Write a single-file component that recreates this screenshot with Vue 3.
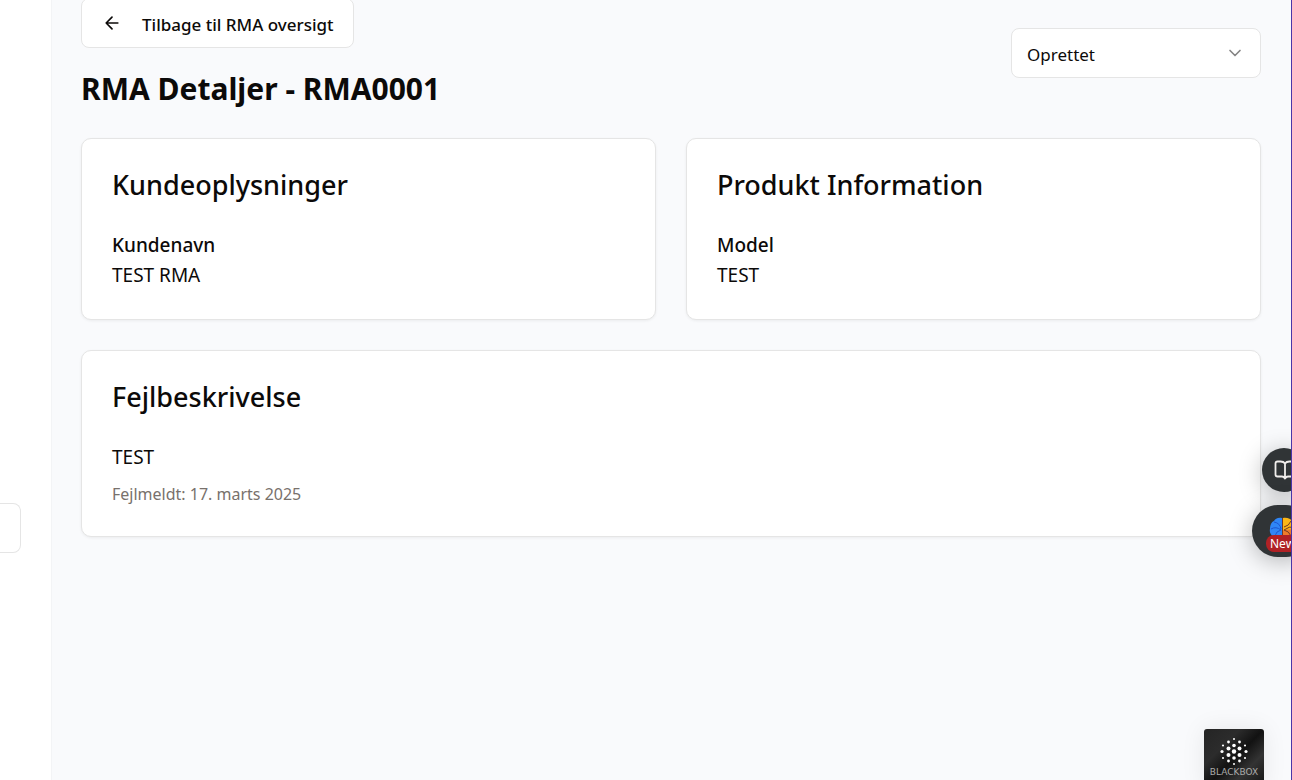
<script setup>
import { ref } from 'vue'

const status = ref('Oprettet')
const cards = [
  { title: 'Kundeoplysninger', label: 'Kundenavn', value: 'TEST RMA' },
  { title: 'Produkt Information', label: 'Model', value: 'TEST' }
]
const dots = [
  [30, 10, 1], [24.5, 13, 1.4], [35.5, 13, 1.4],
  [19, 16.5, 1.1], [30, 16.5, 1.8], [41, 16.5, 1.1],
  [24.5, 19.5, 2], [35.5, 19.5, 2],
  [18, 22.5, 1.6], [30, 22.5, 2.2], [42, 22.5, 1.6],
  [24.5, 26, 2], [35.5, 26, 2],
  [19, 29, 1.1], [30, 29, 1.8], [41, 29, 1.1],
  [24.5, 32, 1.4], [35.5, 32, 1.4], [30, 35, 1]
]
</script>

<template>
  <div class="page">
    <aside class="sidebar"><button class="stub" type="button" aria-label="Menu"></button></aside>
    <main class="main">
      <header class="head">
        <div class="lead">
          <button class="back" type="button">
            <svg width="20" height="20" viewBox="0 0 24 24" fill="none" stroke="currentColor" stroke-width="2" stroke-linecap="round" stroke-linejoin="round"><path d="m12 19-7-7 7-7M19 12H5" /></svg>
            <span>Tilbage til RMA oversigt</span>
          </button>
          <h1>RMA Detaljer - RMA0001</h1>
        </div>
        <div class="status">
          <select v-model="status" aria-label="Status">
            <option>Oprettet</option>
          </select>
          <svg width="20" height="20" viewBox="0 0 24 24" fill="none" stroke="currentColor" stroke-width="2" stroke-linecap="round" stroke-linejoin="round"><path d="m6 9 6 6 6-6" /></svg>
        </div>
      </header>
      <div class="grid">
        <section v-for="c in cards" :key="c.title" class="card">
          <h2>{{ c.title }}</h2>
          <h3>{{ c.label }}</h3>
          <p>{{ c.value }}</p>
        </section>
        <section class="card wide">
          <h2>Fejlbeskrivelse</h2>
          <p>TEST</p>
          <p class="note">Fejlmeldt: 17. marts 2025</p>
        </section>
      </div>
    </main>

    <button class="float book" type="button" aria-label="Book">
      <svg width="22" height="22" viewBox="0 0 22 22" fill="none" stroke="#f1eeec" stroke-width="1.8" stroke-linejoin="round" stroke-linecap="round"><path d="M11 4.5C10 3 8.500 2.500 6.500 2.500H3.500Q1.500 2.500 1.500 4.500V15.500Q1.500 17.500 3.500 17.500H8Q10 17.500 11 19.500Q12 17.500 14 17.500H18.500Q20.500 17.500 20.500 15.500V4.500Q20.500 2.500 18.500 2.500H15.500C13.500 2.500 12 3 11 4.500V18.500" /></svg>
    </button>
    <button class="float brain" type="button">
      <svg width="28" height="24" viewBox="0 0 28 24">
        <path d="M13 1C9 0 6 2 5 4C2 5 1 9 1 12C0 16 3 20 7 20L13 21Z" fill="#2f86f6" />
        <path d="M14 1C18 0 22 2 23 4C26 6 27 9 26 12C28 16 24 20 20 20L14 21Z" fill="#fbb616" />
        <path d="M14 13L26 12C27 17 23 20 20 20L14 21Z" fill="#ef7b2a" />
        <path d="M5 5Q11 6 12 12M2 12Q7 9 12 13M6 19Q7 14 12 13" fill="none" stroke="#1d56d0" stroke-width="1" />
        <path d="M22 4Q20 9 15 10M26 10Q20 9 15 13M22 19Q20 14 15 13M13.500 1V21" fill="none" stroke="#713a25" stroke-width="1" />
      </svg>
      <span class="new">New</span>
    </button>
    <button class="blackbox" type="button">
      <svg width="60" height="40" viewBox="0 0 60 40" fill="#fff"><circle v-for="(d, i) in dots" :key="i" :cx="d[0]" :cy="d[1]" :r="d[2]" /></svg>
      <span>BLACKBOX</span>
    </button>
    <div class="edge"></div>
  </div>
</template>

<style>
body { margin: 0; overflow: hidden; }
</style>

<style scoped>
* { box-sizing: border-box; }
.page {
  position: relative;
  display: flex;
  height: 100vh;
  overflow: hidden;
  background: #f9fafc;
  color: #0c0a09;
  font-family: "Segoe UI", "Noto Sans", "Open Sans", sans-serif;
}
button { padding: 0; border: 0; font-family: inherit; color: inherit; }
.sidebar {
  flex: none;
  display: flex;
  align-items: flex-start;
  width: 52px;
  padding-top: 503px;
  background: #fff;
  border-right: 1px solid #f3f4f6;
}
.stub {
  width: 21px;
  height: 50px;
  background: #fff;
  border: 1px solid #e5e5e5;
  border-left: 0;
  border-radius: 0 8px 8px 0;
}
.main { flex: 1; min-width: 0; margin-top: -2px; padding: 0 31px 30px 29px; }
.head { display: flex; align-items: center; justify-content: space-between; margin-bottom: 30px; }
.back {
  display: flex;
  align-items: center;
  gap: 20px;
  height: 50px;
  padding: 0 19px 0 20px;
  background: #fff;
  border: 1px solid #e5e5e5;
  border-radius: 8px;
  font-size: 17px;
  font-weight: 500;
}
.back span { padding-top: 2px; }
h1, h2, h3, p { margin: 0; }
h1 { margin-top: 22px; font-size: 30px; line-height: 38px; font-weight: 700; }
.status { position: relative; width: 250px; }
.status select {
  display: block;
  width: 100%;
  height: 50px;
  padding: 2px 15px 0;
  appearance: none;
  background: #fff;
  border: 1px solid #e5e5e5;
  border-radius: 8px;
  font: inherit;
  font-size: 17px;
  color: inherit;
}
.status svg { position: absolute; right: 16px; top: 15px; color: #858484; pointer-events: none; }
.grid { display: grid; grid-template-columns: 1fr 1fr; gap: 30px; }
.card {
  padding: 31px 30px 29px;
  background: #fff;
  border: 1px solid #e5e5e5;
  border-radius: 10px;
  box-shadow: 0 1px 3px rgba(0, 0, 0, 0.06);
}
.wide { grid-column: 1 / -1; }
h2 { margin-bottom: 30px; font-size: 27px; line-height: 30px; font-weight: 500; }
h3 { font-size: 19px; line-height: 30px; font-weight: 500; }
p { font-size: 19px; line-height: 30px; }
.note { margin-top: 10px; font-size: 16px; line-height: 25px; color: #78716c; }
.float { position: absolute; background: #303436; box-shadow: 0 4px 24px rgba(0, 0, 0, 0.28); }
.book { right: -14px; top: 448px; width: 44px; height: 44px; border-radius: 22px; }
.book svg { display: block; margin-left: 12px; }
.brain { right: -20px; top: 505px; width: 60px; height: 52px; border-radius: 26px; }
.brain svg { position: absolute; left: 17px; top: 12px; }
.new {
  position: absolute;
  left: 14px;
  top: 30px;
  padding: 0 4px;
  border-radius: 8px;
  background: #b02125;
  color: #fff;
  font-size: 12px;
  line-height: 17px;
}
.blackbox {
  position: absolute;
  right: 28px;
  bottom: -9px;
  width: 60px;
  height: 60px;
  border-radius: 3px;
  overflow: hidden;
  background: linear-gradient(135deg, #242424, #2c2c2c 30%, #121212 50%, #333 70%, #111);
  box-shadow: 0 0 24px rgba(0, 0, 0, 0.08);
}
.blackbox svg { position: absolute; left: 0; top: 0; }
.blackbox span {
  position: absolute;
  left: 0;
  top: 38px;
  width: 100%;
  color: #aaa;
  font-family: "DejaVu Sans", sans-serif;
  font-size: 9px;
  line-height: 11px;
  text-align: center;
}
.edge { position: absolute; top: 0; right: 0; width: 1px; height: 100%; background: #4a36a8; }
</style>
